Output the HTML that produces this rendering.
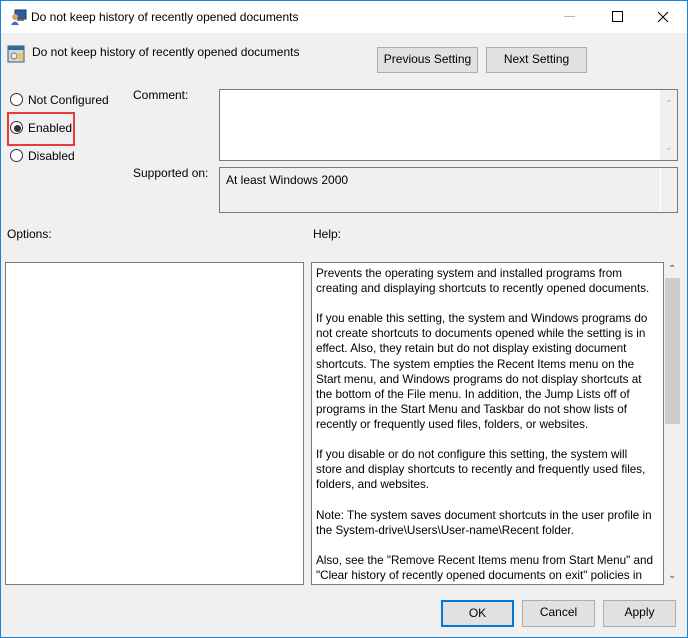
<!DOCTYPE html>
<html><head><style>
*{box-sizing:border-box;margin:0;padding:0}
body{width:688px;height:638px;overflow:hidden;background:#f0f0f0;font-family:"Liberation Sans",sans-serif;font-size:12px;color:#000;position:relative}
.frame{position:absolute;left:0;top:0;width:688px;height:638px;border:1px solid #1883d7;z-index:5;pointer-events:none}
.title{position:absolute;left:0;top:0;width:688px;height:33px;background:#fff}
.a{position:absolute;white-space:nowrap}
.btn{position:absolute;background:#e1e1e1;border:1px solid #adadad;text-align:center;line-height:23px}
.box{position:absolute;border:1px solid #7a7a7a;background:#fff}
.radio{position:absolute;width:13px;height:13px;border:1px solid #333;border-radius:50%;background:#fff}
.help div{height:15.1px;line-height:15.1px;white-space:nowrap;font-size:11.7px}
</style></head><body>
<div class="frame"></div>
<div class="title">
<svg class="a" style="left:10px;top:8px" width="18" height="18" viewBox="0 0 18 18"><rect x="5" y="2" width="11" height="9" fill="#2a5ea8" stroke="#333"/><rect x="7" y="11" width="7" height="2" fill="#777"/><circle cx="5" cy="9" r="3" fill="#d9a46b"/><path d="M1 17 Q5 10 9 17Z" fill="#3a6ec0"/></svg>
<div class="a" style="left:31px;top:10px">Do not keep history of recently opened documents</div>
<div class="a" style="left:564px;top:16px;width:11px;height:1px;background:#bbb"></div>
<div class="a" style="left:612px;top:11px;width:11px;height:11px;border:1px solid #000"></div>
<svg class="a" style="left:657px;top:11px" width="12" height="12"><path d="M1 1L11 11M11 1L1 11" stroke="#000" stroke-width="1"/></svg>
</div>
<svg class="a" style="left:7px;top:45px" width="18" height="18"><rect x="1" y="1" width="16" height="16" fill="#cfd8e0" stroke="#556"/><rect x="1" y="1" width="16" height="4" fill="#3a6a8a"/><circle cx="7" cy="11" r="3" fill="#eee" stroke="#777"/><rect x="11" y="8" width="5" height="7" fill="#e8c860"/></svg>
<div class="a" style="left:32px;top:45px">Do not keep history of recently opened documents</div>
<div class="btn" style="left:377px;top:47px;width:101px;height:26px">Previous Setting</div>
<div class="btn" style="left:486px;top:47px;width:101px;height:26px">Next Setting</div>
<div class="radio" style="left:10px;top:93px"></div><div class="a" style="left:28px;top:93px">Not Configured</div>
<div class="radio" style="left:10px;top:121px"></div><div class="a" style="left:14px;top:125px;width:7px;height:7px;border-radius:50%;background:#333"></div><div class="a" style="left:28px;top:121px">Enabled</div>
<div class="a" style="left:7px;top:112px;width:68px;height:34px;border:2px solid #e83a3a"></div>
<div class="radio" style="left:10px;top:149px"></div><div class="a" style="left:28px;top:149px">Disabled</div>
<div class="a" style="left:133px;top:88px">Comment:</div>
<div class="a" style="left:133px;top:166px">Supported on:</div>
<div class="box" style="left:219px;top:89px;width:459px;height:72px"><div class="a" style="right:0;top:0;width:17px;height:70px;background:#f0f0f0"></div><div class="a" style="right:4px;top:9px;color:#bbb;font-size:10px">&#8963;</div><div class="a" style="right:4px;top:52px;color:#bbb;font-size:10px">&#8964;</div></div>
<div class="box" style="left:219px;top:167px;width:459px;height:46px;background:#f0f0f0"><div class="a" style="right:0;top:0;width:17px;height:44px;border-left:1px solid #fff"></div><div class="a" style="left:6px;top:5px">At least Windows 2000</div></div>
<div class="a" style="left:7px;top:227px">Options:</div>
<div class="a" style="left:313px;top:227px">Help:</div>
<div class="box" style="left:5px;top:262px;width:299px;height:323px"></div>
<div class="box help" style="left:311px;top:262px;width:353px;height:323px;padding:3px 0 0 4px;overflow:hidden">
<div>Prevents the operating system and installed programs from</div>
<div>creating and displaying shortcuts to recently opened documents.</div>
<div></div>
<div>If you enable this setting, the system and Windows programs do</div>
<div>not create shortcuts to documents opened while the setting is in</div>
<div>effect. Also, they retain but do not display existing document</div>
<div>shortcuts. The system empties the Recent Items menu on the</div>
<div>Start menu, and Windows programs do not display shortcuts at</div>
<div>the bottom of the File menu. In addition, the Jump Lists off of</div>
<div>programs in the Start Menu and Taskbar do not show lists of</div>
<div>recently or frequently used files, folders, or websites.</div>
<div></div>
<div>If you disable or do not configure this setting, the system will</div>
<div>store and display shortcuts to recently and frequently used files,</div>
<div>folders, and websites.</div>
<div></div>
<div>Note: The system saves document shortcuts in the user profile in</div>
<div>the System-drive\Users\User-name\Recent folder.</div>
<div></div>
<div>Also, see the "Remove Recent Items menu from Start Menu" and</div>
<div>"Clear history of recently opened documents on exit" policies in</div>
</div>
<div class="a" style="left:664px;top:262px;width:17px;height:323px;background:#f0f0f0"></div>
<div class="a" style="left:665px;top:278px;width:15px;height:146px;background:#cdcdcd"></div>
<div class="a" style="left:668px;top:264px;font-size:10px;color:#555">&#8963;</div>
<div class="a" style="left:668px;top:570px;font-size:10px;color:#555">&#8964;</div>
<div class="btn" style="left:441px;top:600px;width:73px;height:27px;border:2px solid #0078d7;line-height:23px">OK</div>
<div class="btn" style="left:522px;top:600px;width:73px;height:27px">Cancel</div>
<div class="btn" style="left:603px;top:600px;width:73px;height:27px">Apply</div>
</body></html>
